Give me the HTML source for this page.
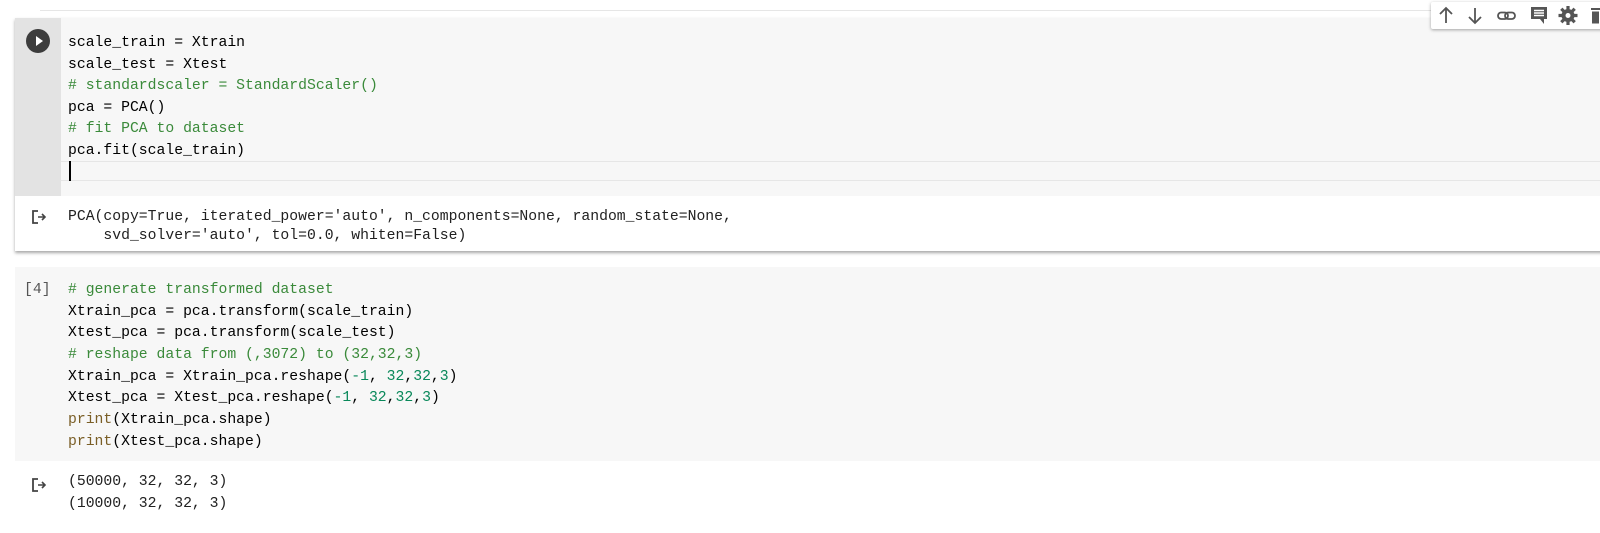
<!DOCTYPE html>
<html><head><style>
body{margin:0;width:1600px;height:533px;background:#fff;position:relative;overflow:hidden;font-family:"Liberation Mono",monospace;}
.code{position:absolute;font-size:14.75px;white-space:pre;color:#000;}
.l{position:absolute;left:0;height:22px;line-height:22px;}
.c{color:#3a8a3a}.n{color:#09885a}.p{color:#7a5e26}
.o{color:#212121}
</style></head><body>
<div style="position:absolute;left:40px;top:10px;width:1560px;height:1px;background:#e6e6e6"></div>
<!-- cell 1 -->
<div style="position:absolute;left:15px;top:18px;width:1600px;height:233px;background:#fff;box-shadow:0 2px 3px rgba(0,0,0,.35)"></div>
<div style="position:absolute;left:15px;top:18px;width:46px;height:178px;background:#e3e3e3"></div>
<div style="position:absolute;left:61px;top:18px;width:1540px;height:178px;background:#f7f7f7"></div>
<div style="position:absolute;left:61px;top:161px;width:1540px;height:1px;background:#e6e6e6"></div>
<div style="position:absolute;left:61px;top:180px;width:1540px;height:1px;background:#e6e6e6"></div>
<div style="position:absolute;left:26px;top:29px;width:24px;height:24px;border-radius:50%;background:#3c3c3c"></div>
<div style="position:absolute;left:36px;top:35.5px;width:0;height:0;border-left:7px solid #fff;border-top:5.5px solid transparent;border-bottom:5.5px solid transparent"></div>
<div class="code" style="left:68px;top:32px">
<div class="l" style="top:0">scale_train = Xtrain</div>
<div class="l" style="top:21.6px">scale_test = Xtest</div>
<div class="l c" style="top:43.2px"># standardscaler = StandardScaler()</div>
<div class="l" style="top:64.8px">pca = PCA()</div>
<div class="l c" style="top:86.4px"># fit PCA to dataset</div>
<div class="l" style="top:108px">pca.fit(scale_train)</div>
</div>
<div style="position:absolute;left:69px;top:161px;width:2px;height:20px;background:#000"></div>
<svg style="position:absolute;left:31px;top:209px" width="18" height="16" viewBox="0 0 18 16"><path d="M7 2H2v12h5" fill="none" stroke="#444" stroke-width="1.8"/><path d="M7 8h7M11 5l3 3-3 3" fill="none" stroke="#444" stroke-width="1.6"/></svg>
<div class="code o" style="left:68px;top:208px;line-height:18.5px">PCA(copy=True, iterated_power='auto', n_components=None, random_state=None,
    svd_solver='auto', tol=0.0, whiten=False)</div>
<!-- toolbar -->
<div style="position:absolute;left:1431px;top:2px;width:180px;height:27px;background:#fff;box-shadow:0 1px 3px rgba(0,0,0,.35);border-radius:2px"></div>
<svg style="position:absolute;left:1431px;top:2px" width="169" height="27" viewBox="0 0 169 27">
<g fill="none" stroke="#555" stroke-width="1.8"><path d="M15 21V6M9 12l6-6 6 6"/><path d="M44 6v15M38 15l6 6 6-6"/>
<rect x="67" y="10.5" width="10" height="6.5" rx="3.2"/><rect x="74" y="10.5" width="10" height="6.5" rx="3.2"/></g>
<path d="M100 5h16v12h-3v5l-4-5h-9z" fill="#555"/><g stroke="#fff" stroke-width="1.4"><path d="M103 8.5h10M103 11h10M103 13.5h10"/></g>
<circle cx="137" cy="13.5" r="6.5" fill="#555"/><g stroke="#555" stroke-width="3.2"><path d="M137 4v19M127.5 13.5h19M130.3 6.8l13.4 13.4M143.7 6.8L130.3 20.2"/></g><circle cx="137" cy="13.5" r="2.5" fill="#fff"/>
<path d="M160 6h9v2h-9zM161 9.5h7v12h-7z" fill="#555"/>
</svg>
<!-- cell 2 -->
<div style="position:absolute;left:15px;top:267px;width:1600px;height:194px;background:#f7f7f7"></div>
<div class="code o" style="left:24px;top:279px;line-height:22px;color:#555">[4]</div>
<div class="code" style="left:68px;top:279px">
<div class="l c" style="top:0"># generate transformed dataset</div>
<div class="l" style="top:21.65px">Xtrain_pca = pca.transform(scale_train)</div>
<div class="l" style="top:43.3px">Xtest_pca = pca.transform(scale_test)</div>
<div class="l c" style="top:64.95px"># reshape data from (,3072) to (32,32,3)</div>
<div class="l" style="top:86.6px">Xtrain_pca = Xtrain_pca.reshape(<span class="n">-1</span>, <span class="n">32</span>,<span class="n">32</span>,<span class="n">3</span>)</div>
<div class="l" style="top:108.25px">Xtest_pca = Xtest_pca.reshape(<span class="n">-1</span>, <span class="n">32</span>,<span class="n">32</span>,<span class="n">3</span>)</div>
<div class="l" style="top:129.9px"><span class="p">print</span>(Xtrain_pca.shape)</div>
<div class="l" style="top:151.55px"><span class="p">print</span>(Xtest_pca.shape)</div>
</div>
<svg style="position:absolute;left:31px;top:477px" width="18" height="16" viewBox="0 0 18 16"><path d="M7 2H2v12h5" fill="none" stroke="#444" stroke-width="1.8"/><path d="M7 8h7M11 5l3 3-3 3" fill="none" stroke="#444" stroke-width="1.6"/></svg>
<div class="code o" style="left:68px;top:472px;line-height:21.8px">(50000, 32, 32, 3)
(10000, 32, 32, 3)</div>
</body></html>
